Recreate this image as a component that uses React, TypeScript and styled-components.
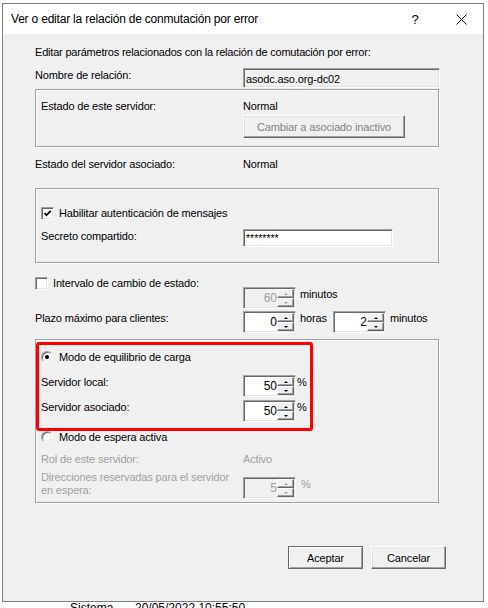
import styled, { createGlobalStyle } from "styled-components";

const GlobalStyle = createGlobalStyle`
  html, body {
    margin: 0;
    padding: 0;
    background: #ffffff;
  }
  body {
    font-family: "Liberation Sans", Arial, sans-serif;
  }
`;

const Screen = styled.div`
  width: 488px;
  height: 608px;
  overflow: hidden;
  box-sizing: border-box;
  padding: 3px 0 0 2px;
  background: #ffffff;
`;

const Window = styled.div`
  width: 482px;
  height: 599px;
  box-sizing: border-box;
  border: 1px solid #7f7f7f;
  background: #f0f0f0;
  display: flex;
  flex-direction: column;
`;

const TitleBar = styled.div`
  height: 30px;
  flex: none;
  display: flex;
  align-items: center;
  background: #ffffff;
  color: #000;
  font-size: 12px;
  letter-spacing: -0.2px;
`;

const Title = styled.div`
  flex: 1;
  padding-left: 8px;
`;

const CaptionButton = styled.div<{ $shift?: number }>`
  width: 44px;
  height: 30px;
  display: flex;
  align-items: center;
  justify-content: center;
  font-size: 13px;
  margin-left: ${(p) => p.$shift ?? 0}px;
`;

const Body = styled.div`
  --label: 208px;
  flex: 1;
  padding-left: 32px;
  font-size: 11px;
  letter-spacing: -0.15px;
  line-height: 14px;
  color: #000;
`;

const Row = styled.div<{ $mt?: number; $h?: number }>`
  display: grid;
  grid-template-columns: var(--label) auto;
  align-items: start;
  height: ${(p) => p.$h ?? 14}px;
  margin-top: ${(p) => p.$mt ?? 0}px;
`;

const Text = styled.span<{ $disabled?: boolean; $tight?: boolean }>`
  color: ${(p) => (p.$disabled ? "#a0a0a0" : "#000")};
  letter-spacing: ${(p) => (p.$tight ? "-0.2px" : "inherit")};
  white-space: nowrap;
`;

const WrapText = styled.span<{ $disabled?: boolean }>`
  color: ${(p) => (p.$disabled ? "#a0a0a0" : "#000")};
  line-height: 13px;
`;

const Field = styled.div<{ $mt?: number }>`
  display: flex;
  align-items: flex-start;
  margin-top: ${(p) => p.$mt ?? 0}px;
`;

const Unit = styled.span<{ $ml: number; $w?: number; $disabled?: boolean }>`
  margin-left: ${(p) => p.$ml}px;
  width: ${(p) => (p.$w ? `${p.$w}px` : "auto")};
  color: ${(p) => (p.$disabled ? "#a0a0a0" : "#000")};
`;

const TextBox = styled.div<{ $w: number; $h: number; $readOnly?: boolean }>`
  width: ${(p) => p.$w}px;
  height: ${(p) => p.$h}px;
  box-sizing: border-box;
  border: 1px solid;
  border-color: #a0a0a0 #ffffff #ffffff #a0a0a0;
  box-shadow: inset 1px 1px 0 #696969, inset -1px -1px 0 #e3e3e3;
  background: ${(p) => (p.$readOnly ? "#f0f0f0" : "#ffffff")};
  padding: ${(p) => (p.$readOnly ? "3px 0 0 2px" : "1px 0 0 2px")};
  font-size: ${(p) => (p.$readOnly ? "11px" : "10.5px")};
  letter-spacing: ${(p) => (p.$readOnly ? "-0.15px" : "0")};
  line-height: 14px;
  overflow: hidden;
`;

const Group = styled.div<{ $mt: number; $h: number; $pad?: number }>`
  --label: 202px;
  width: 404px;
  height: ${(p) => p.$h}px;
  box-sizing: border-box;
  margin-top: ${(p) => p.$mt}px;
  padding-left: ${(p) => p.$pad ?? 5}px;
  border: 1px solid #a0a0a0;
  box-shadow: 1px 1px 0 #ffffff, inset 1px 1px 0 #ffffff;
`;

const Inset = styled.div`
  padding-left: 5px;
`;

const Highlight = styled.div`
  width: 277px;
  height: 89px;
  box-sizing: border-box;
  margin-top: 2px;
  padding-left: 2px;
  border: 3px solid #ff0000;
  border-radius: 3px;
`;

const Choice = styled.div<{ $mt?: number; $h?: number }>`
  display: flex;
  align-items: center;
  gap: 5px;
  height: ${(p) => p.$h ?? 14}px;
  margin-top: ${(p) => p.$mt ?? 0}px;
  white-space: nowrap;
`;

const CheckBox = styled.span`
  width: 13px;
  height: 13px;
  flex: none;
  box-sizing: border-box;
  display: flex;
  align-items: center;
  justify-content: center;
  background: #ffffff;
  border: 1px solid;
  border-color: #a0a0a0 #ffffff #ffffff #a0a0a0;
  box-shadow: inset 1px 1px 0 #696969, inset -1px -1px 0 #e3e3e3;
`;

const Radio = styled.span<{ $checked?: boolean }>`
  width: 12px;
  height: 12px;
  flex: none;
  margin-right: 1px;
  box-sizing: border-box;
  display: flex;
  align-items: center;
  justify-content: center;
  border-radius: 50%;
  background: #ffffff;
  border: 1px solid;
  border-color: #a0a0a0 #ffffff #ffffff #a0a0a0;
  box-shadow: inset 1px 1px 0 #696969, inset -1px -1px 0 #e3e3e3;

  &::after {
    content: "";
    width: 4px;
    height: 4px;
    border-radius: 50%;
    background: ${(p) => (p.$checked ? "#000" : "transparent")};
  }
`;

const SpinBox = styled.div<{ $disabled?: boolean; $ml?: number }>`
  display: flex;
  width: 53px;
  height: 22px;
  flex: none;
  box-sizing: border-box;
  margin-left: ${(p) => p.$ml ?? 0}px;
  padding: 1px;
  border: 1px solid;
  border-color: #a0a0a0 #ffffff #ffffff #a0a0a0;
  box-shadow: inset 1px 1px 0 #696969, inset -1px -1px 0 #e3e3e3;
  background: ${(p) => (p.$disabled ? "#f0f0f0" : "#ffffff")};
`;

const SpinValue = styled.span<{ $disabled?: boolean }>`
  flex: 1;
  text-align: right;
  line-height: 19px;
  font-size: 12px;
  letter-spacing: 0;
  color: ${(p) => (p.$disabled ? "#a0a0a0" : "#000")};
`;

const SpinButtons = styled.div`
  width: 17px;
  display: flex;
  flex-direction: column;
`;

const SpinButton = styled.span<{ $down?: boolean; $disabled?: boolean }>`
  flex: 1;
  display: flex;
  align-items: center;
  justify-content: center;
  box-sizing: border-box;
  background: #f0f0f0;
  border: 1px solid;
  border-color: #ffffff #696969 #696969 #ffffff;
  box-shadow: inset -1px -1px 0 #a0a0a0;

  &::after {
    content: "";
    width: 0;
    height: 0;
    border-left: 2px solid transparent;
    border-right: 2px solid transparent;
    ${(p) => (p.$down ? "border-top" : "border-bottom")}: 2px solid
      ${(p) => (p.$disabled ? "#a0a0a0" : "#000")};
  }
`;

const PushButton = styled.button<{ $w: number; $default?: boolean }>`
  width: ${(p) => p.$w}px;
  height: 23px;
  box-sizing: border-box;
  margin: 0;
  padding: 0;
  font: inherit;
  letter-spacing: inherit;
  color: ${(p) => (p.disabled ? "#838383" : "#000")};
  background: #f0f0f0;
  border: 1px solid;
  border-color: ${(p) =>
    p.$default ? "#696969" : "#ffffff #696969 #696969 #ffffff"};
  box-shadow: ${(p) =>
    p.$default
      ? "inset 1px 1px 0 #ffffff, inset -1px -1px 0 #a0a0a0"
      : "inset -1px -1px 0 #a0a0a0, inset 1px 1px 0 #e3e3e3"};
`;

const ButtonBar = styled.div`
  display: flex;
  justify-content: flex-end;
  gap: 8px;
  width: 411px;
  margin-top: 43px;
`;

const Behind = styled.div`
  display: flex;
  padding-left: 68px;
  font-size: 12px;
  line-height: 12px;
  color: #000;
`;

const BehindCell = styled.span<{ $w?: number }>`
  width: ${(p) => (p.$w ? `${p.$w}px` : "auto")};
`;

function Spinner({
  value,
  disabled,
  ml,
}: {
  value: string;
  disabled?: boolean;
  ml?: number;
}) {
  return (
    <SpinBox $disabled={disabled} $ml={ml}>
      <SpinValue $disabled={disabled}>{value}</SpinValue>
      <SpinButtons>
        <SpinButton $disabled={disabled} />
        <SpinButton $down $disabled={disabled} />
      </SpinButtons>
    </SpinBox>
  );
}

function CheckMark() {
  return (
    <svg width="9" height="9" viewBox="0 0 9 9">
      <path d="M1.5 4 L3.5 6.2 L7.8 1.8" fill="none" stroke="#000" strokeWidth="1.7" />
    </svg>
  );
}

function CloseIcon() {
  return (
    <svg width="11" height="11" viewBox="0 0 11 11">
      <path d="M0.5 0.5 L10.5 10.5 M10.5 0.5 L0.5 10.5" stroke="#000" strokeWidth="1" />
    </svg>
  );
}

export default function App() {
  return (
    <>
      <GlobalStyle />
      <Screen>
        <Window>
          <TitleBar>
            <Title>Ver o editar la relación de conmutación por error</Title>
            <CaptionButton $shift={-2}>?</CaptionButton>
            <CaptionButton $shift={2}>
              <CloseIcon />
            </CaptionButton>
          </TitleBar>

          <Body>
            <Row $mt={11}>
              <Text $tight>
                Editar parámetros relacionados con la relación de comutación por error:
              </Text>
            </Row>

            <Row $mt={9} $h={20}>
              <Text>Nombre de relación:</Text>
              <TextBox $w={197} $h={20} $readOnly>
                asodc.aso.org-dc02
              </TextBox>
            </Row>

            <Group $mt={1} $h={58}>
              <Row $mt={9}>
                <Text>Estado de este servidor:</Text>
                <Text>Normal</Text>
              </Row>
              <Row $mt={2} $h={23}>
                <span />
                <PushButton $w={162} disabled>
                  Cambiar a asociado inactivo
                </PushButton>
              </Row>
            </Group>

            <Row $mt={10}>
              <Text>Estado del servidor asociado:</Text>
              <Text>Normal</Text>
            </Row>

            <Group $mt={17} $h={75}>
              <Choice $mt={17}>
                <CheckBox>
                  <CheckMark />
                </CheckBox>
                <Text>Habilitar autenticación de mensajes</Text>
              </Choice>
              <Row $mt={9} $h={18}>
                <Text>Secreto compartido:</Text>
                <TextBox $w={150} $h={18}>
                  ********
                </TextBox>
              </Row>
            </Group>

            <Choice $mt={13}>
              <CheckBox />
              <Text>Intervalo de cambio de estado:</Text>
            </Choice>

            <Row $mt={-3} $h={22}>
              <span />
              <Field>
                <Spinner value="60" disabled />
                <Unit $ml={4}>minutos</Unit>
              </Field>
            </Row>

            <Row $mt={2} $h={22}>
              <Text>Plazo máximo para clientes:</Text>
              <Field>
                <Spinner value="0" />
                <Unit $ml={4} $w={33}>
                  horas
                </Unit>
                <Spinner value="2" />
                <Unit $ml={4}>minutos</Unit>
              </Field>
            </Row>

            <Group $mt={6} $h={164} $pad={0}>
              <Highlight>
                <Choice $mt={5}>
                  <Radio $checked />
                  <Text>Modo de equilibrio de carga</Text>
                </Choice>
                <Row $mt={11} $h={22}>
                  <Text>Servidor local:</Text>
                  <Field>
                    <Spinner value="50" />
                    <Unit $ml={1}>%</Unit>
                  </Field>
                </Row>
                <Row $mt={3} $h={22}>
                  <Text>Servidor asociado:</Text>
                  <Field>
                    <Spinner value="50" />
                    <Unit $ml={1}>%</Unit>
                  </Field>
                </Row>
              </Highlight>

              <Inset>
                <Choice $h={12}>
                  <Radio />
                  <Text>Modo de espera activa</Text>
                </Choice>
                <Row $mt={9}>
                  <Text $disabled>Rol de este servidor:</Text>
                  <Text $disabled>Activo</Text>
                </Row>
                <Row $mt={5} $h={28}>
                  <WrapText $disabled>
                    Direcciones reservadas para el servidor
                    <br />
                    en espera:
                  </WrapText>
                  <Field $mt={6}>
                    <Spinner value="5" disabled />
                    <Unit $ml={5} $disabled>
                      %
                    </Unit>
                  </Field>
                </Row>
              </Inset>
            </Group>

            <ButtonBar>
              <PushButton $w={75} $default>
                Aceptar
              </PushButton>
              <PushButton $w={75}>Cancelar</PushButton>
            </ButtonBar>
          </Body>
        </Window>

        <Behind>
          <BehindCell $w={65}>Sistema</BehindCell>
          <BehindCell>20/05/2022 10:55:50</BehindCell>
        </Behind>
      </Screen>
    </>
  );
}
